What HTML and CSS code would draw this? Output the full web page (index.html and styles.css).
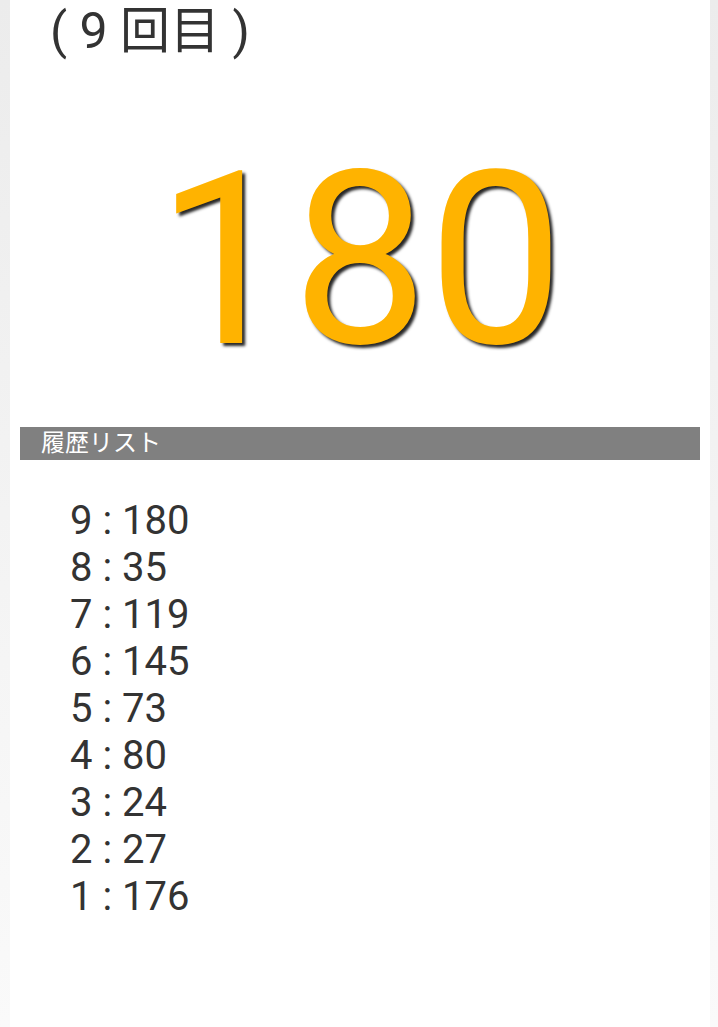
FILE: index.html
```
<!DOCTYPE html>
<html lang="ja">
<head>
<meta charset="utf-8">
<title>履歴</title>
<link rel="stylesheet" href="styles.css">
</head>
<body>
<main class="page">
  <h1 class="round">( 9 回目 )</h1>
  <div class="result">180</div>
  <h2 class="section-bar">履歴リスト</h2>
  <ul class="history">
    <li>9 : 180</li>
    <li>8 : 35</li>
    <li>7 : 119</li>
    <li>6 : 145</li>
    <li>5 : 73</li>
    <li>4 : 80</li>
    <li>3 : 24</li>
    <li>2 : 27</li>
    <li>1 : 176</li>
  </ul>
</main>
</body>
</html>
```
FILE: styles.css
```
html, body {
  margin: 0;
  padding: 0;
  height: 100%;
}

body {
  background: linear-gradient(#ececec, #fafafa);
  font-family: "Roboto", "Noto Sans CJK JP", sans-serif;
  color: #333333;
}

.page {
  margin: 0 8px 0 10px;
  min-height: 100%;
  background: #ffffff;
  display: flow-root;
}

.round {
  margin: 0;
  padding: 2px 0 0 40px;
  font-size: 50px;
  font-weight: 400;
  line-height: 58px;
}

.result {
  margin: 58px 0 25px;
  text-align: center;
  font-size: 242px;
  line-height: 284px;
  color: #ffb300;
  text-shadow: 3px 3px 3px rgba(0, 0, 0, 0.85);
}

.section-bar {
  margin: 0 10px;
  padding: 0 0 0 21px;
  background: #808080;
  color: #ffffff;
  font-size: 24px;
  font-weight: 400;
  height: 33px;
  line-height: 33px;
}

.history {
  list-style: none;
  margin: 0;
  padding: 37px 0 0 60px;
  font-size: 40px;
  line-height: 47px;
}
```
